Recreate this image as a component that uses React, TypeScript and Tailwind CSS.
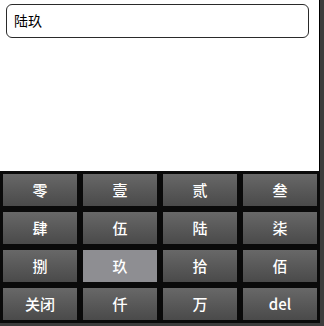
const keys = [
  "零", "壹", "贰", "叁",
  "肆", "伍", "陆", "柒",
  "捌", "玖", "拾", "佰",
  "关闭", "仟", "万", "del",
];

export default function App() {
  const active = "玖";

  return (
    <div
      className="w-[324px] h-[326px] bg-[#3c3c3c]"
      style={{ fontFamily: '"Liberation Sans", "Noto Sans CJK SC", sans-serif' }}
    >
      <div className="w-[320px] h-[323px] flex flex-col">
        {/* input area */}
        <div className="h-[171px] bg-white border-r border-black pt-[4px] pl-[6px]">
          <div className="w-[303px] h-[34px] border border-[#2a2a2a] rounded-[6px] flex items-center px-[7px] text-[14px] text-black">
            陆玖
          </div>
        </div>

        {/* keyboard */}
        <div className="flex-1 bg-[#0a0a0a] p-[3px] grid grid-cols-4 grid-rows-4 gap-[6px] font-['Noto_Sans_CJK_SC',sans-serif]">
          {keys.map((k) => (
            <button
              key={k}
              className={
                k === active
                  ? "h-[32px] bg-[#8e8e92] text-white text-[15px] font-medium flex items-center justify-center"
                  : "h-[32px] bg-gradient-to-b from-[#686868] to-[#4a4a4a] text-white text-[15px] font-medium flex items-center justify-center"
              }
            >
              {k}
            </button>
          ))}
        </div>
      </div>
    </div>
  );
}
